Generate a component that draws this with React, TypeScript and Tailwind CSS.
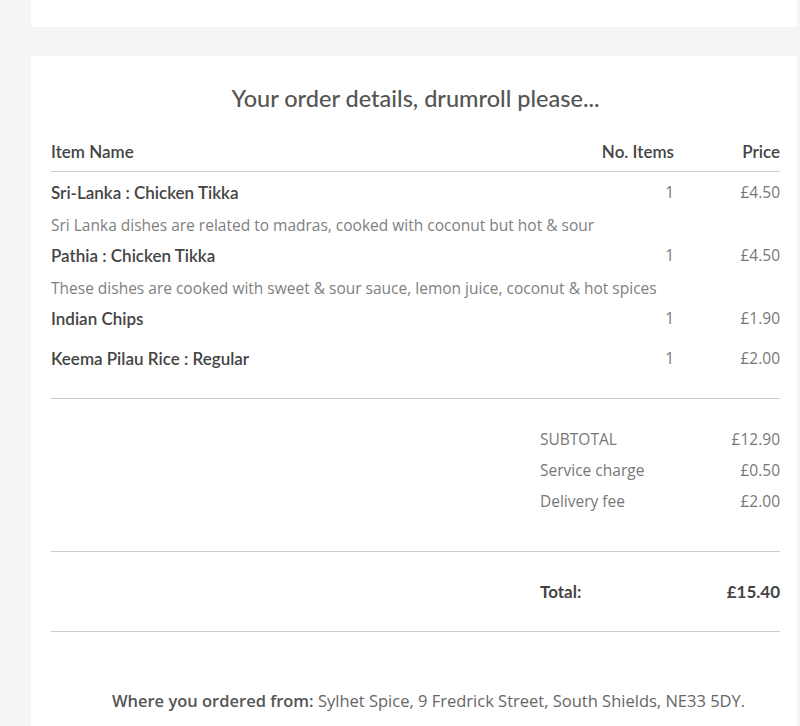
const items = [
  { name: "Sri-Lanka : Chicken Tikka", qty: 1, price: "£4.50", desc: "Sri Lanka dishes are related to madras, cooked with coconut but hot & sour" },
  { name: "Pathia : Chicken Tikka", qty: 1, price: "£4.50", desc: "These dishes are cooked with sweet & sour sauce, lemon juice, coconut & hot spices" },
  { name: "Indian Chips", qty: 1, price: "£1.90" },
  { name: "Keema Pilau Rice : Regular", qty: 1, price: "£2.00" },
];

const charges = [
  { label: "SUBTOTAL", value: "£12.90" },
  { label: "Service charge", value: "£0.50" },
  { label: "Delivery fee", value: "£2.00" },
];

const heading = { fontFamily: "Lato, 'Noto Sans', sans-serif" };
const body = { fontFamily: "'Open Sans', 'Noto Sans', sans-serif" };

export default function App() {
  return (
    <div className="min-h-[726px] bg-[#f5f5f5] pl-[31px] pr-[3px] overflow-hidden">
      <div className="h-[27px] bg-white" />
      <div className="mt-[29px] bg-white pl-5 pr-[17px] pt-[27px] pb-12">
        <h2 className="text-center text-[23.5px] leading-[30px] text-[#555] font-medium" style={heading}>
          Your order details, drumroll please...
        </h2>

        <div className="mt-[28px] flex items-center h-[31px] pb-[9px] border-b border-[#ccc] text-[17px] leading-[22px] text-[#444] font-semibold" style={heading}>
          <span className="flex-1">Item Name</span>
          <span className="w-[120px] text-right">No. Items</span>
          <span className="w-[106px] text-right">Price</span>
        </div>

        <div className="pt-[10px] pb-[10px] border-b border-[#ccc]">
          {items.map((it) => (
            <div key={it.name} className={it.desc ? "pb-[9px]" : "pb-[18px]"}>
              <div className="flex items-center h-[22px] text-[#777] text-[15.5px]" style={body}>
                <span className="flex-1 text-[17px] text-[#444] font-semibold" style={heading}>{it.name}</span>
                <span className="w-[120px] text-right">{it.qty}</span>
                <span className="w-[106px] text-right">{it.price}</span>
              </div>
              {it.desc && (
                <p className="mt-[10px] text-[15.5px] text-[#808080] leading-[22px]" style={body}>{it.desc}</p>
              )}
            </div>
          ))}
        </div>

        <div className="flex justify-end pt-[29px] pb-[39px] border-b border-[#ccc]">
          <div className="w-[240px] flex flex-col gap-[9px] text-[15.5px] text-[#777]" style={body}>
            {charges.map((c) => (
              <div key={c.label} className="flex justify-between leading-[22px]">
                <span>{c.label}</span>
                <span>{c.value}</span>
              </div>
            ))}
          </div>
        </div>

        <div className="flex justify-end pt-[29px] pb-[28px] border-b border-[#ccc]">
          <div className="w-[240px] flex justify-between text-[17px] text-[#444] font-bold leading-[22px]" style={heading}>
            <span>Total:</span>
            <span>£15.40</span>
          </div>
        </div>

        <p className="mt-[58px] pl-[26px] text-center text-[16.5px] leading-[22px] text-[#666]" style={body}>
          <span className="font-semibold text-[#555]">Where you ordered from:</span> Sylhet Spice, 9 Fredrick Street, South Shields, NE33 5DY.
        </p>
      </div>
    </div>
  );
}
